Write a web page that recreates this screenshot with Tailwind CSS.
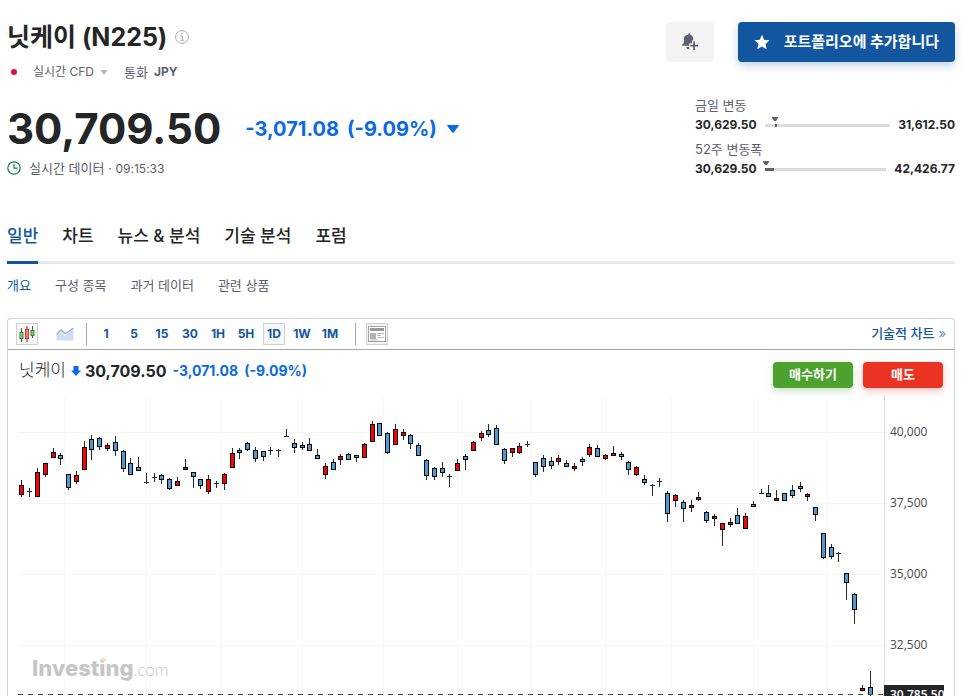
<!DOCTYPE html>
<html lang="ko">

<head>
  <meta charset="UTF-8">
  <meta name="viewport" content="width=device-width, initial-scale=1.0">
  <title>닛케이 (N225)</title>
  <script src="https://cdn.jsdelivr.net/npm/@tailwindcss/browser@4"></script>
</head>

<body class="bg-white font-['Inter','Noto_Sans_CJK_KR',sans-serif] text-[#232526] overflow-hidden">
  <div class="pl-[7px] pr-[18px] pt-[22px]">
    <!-- Header -->
    <header class="flex justify-between">
      <div>
        <div class="flex items-center gap-2 h-[30px]">
          <h1 class="text-[25px] leading-[30px] font-bold whitespace-nowrap">닛케이 (N225)</h1>
          <button aria-label="정보">
            <svg class="w-[14px] h-[14px] block" viewBox="0 0 14 14" fill="none" stroke="#a9abaf">
              <circle cx="7" cy="7" r="6.4" />
              <path d="M5.5 6h1.8v4.2M5.3 10.3h3.6" />
              <path d="M6.3 3.8h1.4" stroke-width="1.4" />
            </svg>
          </button>
        </div>
        <div class="flex items-center mt-3 h-4 text-[13px] leading-4 text-[#5b616e]">
          <span class="w-[6px] h-[6px] rounded-full bg-[#d91440] ml-1"></span>
          <button class="flex items-center gap-[6px] ml-4">
            <span class="text-xs">실시간 CFD</span>
            <svg class="w-2 h-[5px]" viewBox="0 0 8 5"><path d="M.5 0h7L4 5z" fill="#b5b8be" /></svg>
          </button>
          <span class="ml-4">통화</span>
          <b class="ml-[6px] text-xs font-bold">JPY</b>
        </div>
        <div class="flex items-center mt-6 h-[50px]">
          <span class="text-[42px] leading-[50px] font-bold">30,709.50</span>
          <span class="ml-6 text-xl font-bold text-[#0a69e5]">-3,071.08</span>
          <span class="ml-2 text-xl font-bold text-[#0a69e5]">(-9.09%)</span>
          <svg class="ml-[10px] w-3 h-2" viewBox="0 0 12 8"><path d="M.5 0h11q.6.4.2 1L6.7 7.500q-.7.7-1.400 0L.3 1Q-.1.4.5 0z" fill="#0a69e5" /></svg>
        </div>
        <div class="flex items-center gap-2 mt-[6px] h-4 text-[13px] leading-4 text-[#5b616e]">
          <svg class="w-[14px] h-[14px]" viewBox="0 0 14 14" fill="none" stroke="#0e8043" stroke-width="1.200">
            <circle cx="7" cy="7" r="6.2" />
            <path d="M7 3v4.200h3.400" />
          </svg>
          <span>실시간 데이터 · <span class="text-xs">09:15:33</span></span>
        </div>
      </div>

      <div class="flex flex-col items-end">
        <div class="flex gap-6">
          <button aria-label="알림 추가" class="w-12 h-10 rounded bg-[#f4f4f5] flex items-center justify-center">
            <svg class="w-4 h-[18px]" viewBox="0 0 16 18" fill="#5b616e">
              <path d="M6.200 1.800C6.200.8 6.700.3 7.200.3s1 .5 1 1.400c1.900.5 3 2 3 4v1.800H9.900v2.700H7.300v2.600H.200v-1.200l1.600-1.700V5.800c0-2.100 1.600-3.600 4.400-4z" />
              <path d="M4.200 14h3v2.300c-1.500.2-2.700-.8-3-2.300z" />
              <path d="M11.200 8.500h1.800v3.300h3v1.800h-3v3.300h-1.800v-3.300H8.300v-1.800h2.900z" />
            </svg>
          </button>
          <button class="h-10 px-4 rounded bg-[#1256a0] text-white text-[15px] font-bold flex items-center gap-[14px] shadow-[0_4px_8px_rgba(18,86,160,0.25)]">
            <svg class="w-4 h-4" viewBox="0 0 16 16" fill="#fff"><path d="M8 .8l2.200 4.900 5.300.6-3.900 3.600 1 5.300L8 12.600l-4.700 2.600 1.100-5.300L.5 6.300l5.300-.6z" /></svg>
            <span>포트폴리오에 추가합니다</span>
          </button>
        </div>
        <!-- Ranges -->
        <div class="w-[260px] mt-[33px]">
          <p class="text-[13px] leading-5 text-[#5b616e]">금일 변동</p>
          <div class="flex items-center gap-2 h-5 text-xs font-bold">
            <span>30,629.50</span>
            <div class="relative flex-1 h-[3px] bg-[#d9dbde]">
              <span class="absolute left-[8%] top-0 w-[2px] h-[3px] bg-[#5b616e]"></span>
              <svg class="absolute left-[6%] -top-[7px] w-[6px] h-1" viewBox="0 0 6 4"><path d="M0 0h6v1L4 4H2L0 1z" fill="#5b616e" /></svg>
            </div>
            <span>31,612.50</span>
          </div>
          <p class="mt-1 text-[13px] leading-5 text-[#5b616e]">52주 변동폭</p>
          <div class="flex items-center gap-2 h-5 text-xs font-bold">
            <span>30,629.50</span>
            <div class="relative flex-1 h-[3px] bg-[#d9dbde]">
              <span class="absolute left-0 top-0 w-[8%] h-[3px] bg-[#5b616e]"></span>
              <svg class="absolute -left-[2px] -top-[7px] w-[6px] h-1" viewBox="0 0 6 4"><path d="M0 0h6v1L4 4H2L0 1z" fill="#5b616e" /></svg>
            </div>
            <span>42,426.77</span>
          </div>
        </div>
      </div>
    </header>

    <!-- Tabs -->
    <nav class="mt-[37px]">
      <div class="flex gap-6 h-12 border-b-3 border-[#e6e9eb] text-[17px] leading-6 font-medium">
        <a href="#" class="h-12 pt-2 border-b-3 border-[#1256a0] text-[#1256a0]">일반</a>
        <a href="#" class="pt-2">차트</a>
        <a href="#" class="pt-2">뉴스 &amp; 분석</a>
        <a href="#" class="pt-2">기술 분석</a>
        <a href="#" class="pt-2">포럼</a>
      </div>
      <div class="flex gap-6 mt-[11px] text-[13px] leading-5 text-[#5b616e]">
        <a href="#" class="text-[#1256a0]">개요</a>
        <a href="#">구성 종목</a>
        <a href="#">과거 데이터</a>
        <a href="#">관련 상품</a>
      </div>
    </nav>

    <!-- Chart -->
    <section class="mt-[23px] border border-b-0 border-[#d2d3d5] rounded-t">
      <div class="flex items-center h-[31px] pl-2 pr-2 border-b border-[#a5a7a9] text-xs font-bold text-[#1256a0]">
        <button aria-label="캔들" class="w-[22px] h-[22px] border border-[#d0d0d0] bg-[#f8f8f8] flex items-center justify-center">
          <svg class="w-[18px] h-[18px]" viewBox="0 0 18 18">
            <path d="M3.500 3v14M14.500 1v12" stroke="#4c5a4c" />
            <path d="M9 1v16" stroke="#7a3030" />
            <rect x="2" y="7.500" width="3" height="6" fill="#7fd36f" stroke="#348a37" />
            <rect x="7.500" y="4.500" width="3" height="9" fill="#f77" stroke="#d33" />
            <rect x="13" y="5.500" width="3" height="5" fill="#7fd36f" stroke="#348a37" />
          </svg>
        </button>
        <button aria-label="영역" class="ml-[18px]">
          <svg class="w-[18px] h-[14px] block" viewBox="0 0 18 14">
            <path d="M.5 9L5 5l3.500 4L17.500 2v11.500H.5z" fill="#cfdef2" />
            <path d="M.5 7.500L5 3l4 3.500 2.500-1.200L17.500 1" fill="none" stroke="#8fa9c8" stroke-width="1.300" />
          </svg>
        </button>
        <span class="ml-3 w-px h-[22px] bg-[#a5a7a9]"></span>
        <div class="flex gap-[6px] ml-2">
          <button class="w-[22px] h-[22px]">1</button>
          <button class="w-[22px] h-[22px]">5</button>
          <button class="w-[22px] h-[22px]">15</button>
          <button class="w-[22px] h-[22px]">30</button>
          <button class="w-[22px] h-[22px]">1H</button>
          <button class="w-[22px] h-[22px]">5H</button>
          <button class="w-[22px] h-[22px] border border-[#d0d0d0] bg-[#f8f8f8]">1D</button>
          <button class="w-[22px] h-[22px]">1W</button>
          <button class="w-[22px] h-[22px]">1M</button>
        </div>
        <span class="ml-[14px] w-px h-[22px] bg-[#a5a7a9]"></span>
        <button aria-label="뉴스" class="ml-[10px] w-[22px] h-[22px] border border-[#d0d0d0] bg-[#f4f4f4] flex items-center justify-center">
          <svg class="w-[18px] h-[18px]" viewBox="0 0 18 18">
            <rect x=".5" y="1.500" width="17" height="15" fill="#fff" stroke="#a4a4a4" />
            <path d="M2 3h14v3H2z" fill="#999" />
            <path d="M2 8h6v6H2z" fill="#b0b0b0" />
            <path d="M9 8.500h7M9 10.500h4M9 12.500h7M2 15h8" stroke="#b9b9b9" />
          </svg>
        </button>
        <a href="#" class="ml-auto flex items-center gap-1 text-[13px] font-medium">기술적 차트 <span class="font-normal text-[#5c8fd0]">»</span></a>
      </div>

      <div class="flex items-start justify-between h-[46px] pl-[11px] pr-[11px]">
        <div class="flex items-center h-[42px]">
          <span class="text-[17px] font-light">닛케이</span>
          <svg class="ml-[5px] w-[10px] h-[10px]" viewBox="0 0 10 10"><path d="M2.500 0h5v4.500H10L5 10 0 4.500h2.500z" fill="#0a69e5" /></svg>
          <span class="ml-1 text-base font-bold">30,709.50</span>
          <span class="ml-[6px] text-sm font-bold text-[#0a69e5]">-3,071.08</span>
          <span class="ml-[6px] text-sm font-bold text-[#0a69e5]">(-9.09%)</span>
        </div>
        <div class="flex gap-[10px] mt-3 text-[13px] font-bold text-white">
          <button class="w-20 h-[26px] rounded bg-[#4ca22f] shadow-[0_3px_7px_rgba(76,162,47,0.3)]">매수하기</button>
          <button class="w-20 h-[26px] rounded bg-[#ea3323] shadow-[0_3px_7px_rgba(234,51,35,0.3)]">매도</button>
        </div>
      </div>

      <svg id="chart" class="block w-full h-auto font-['Open_Sans',sans-serif] text-xs" viewBox="8 396 946 300" role="img" aria-label="닛케이 일간 차트">
        <g id="grid" stroke="#f7f7f7" shape-rendering="crispEdges"></g>
        <text x="32" y="676" class="font-['Inter',sans-serif] text-[22px] font-extrabold" fill="#c6c6c6">Investing<tspan class="font-['Lato',sans-serif] text-[17px] font-light">.com</tspan></text>
        <rect x="102" y="658" width="4" height="3" fill="#fbe3b0" />
        <path d="M884.500 396v300" stroke="#dcdcdf" shape-rendering="crispEdges" />
        <g id="candles" shape-rendering="crispEdges"></g>
        <path d="M18 694.500h866" stroke="#444" stroke-dasharray="5 5" shape-rendering="crispEdges" />
        <g id="labels" fill="#4a4a4a"></g>
        <rect x="884" y="685" width="60" height="18" fill="#232526" />
        <text x="890" y="699" fill="#fff" class="font-semibold">30,785.50</text>
      </svg>
    </section>
  </div>

  <script>
    // x, high, body top, body bottom, low, type (r = up, b = down, d = doji)
    const candles = [
      [21,480,485,495,497,'r'],[29,488,491,491,497,'d'],[37,468,472,497,497,'r'],[45,463,463,475,477,'r'],
      [53,448,452,458,458,'r'],[60,453,455,459,465,'b'],[68,474,474,488,490,'b'],[76,471,475,482,484,'r'],
      [84,441,447,470,470,'r'],[91,435,439,450,460,'b'],[99,437,438,447,450,'b'],[107,443,445,449,451,'r'],
      [115,436,442,451,456,'b'],[123,450,451,469,472,'b'],[130,458,463,475,475,'b'],[138,457,467,471,471,'b'],
      [146,473,482,482,484,'d'],[154,473,477,477,482,'d'],[161,474,475,480,484,'b'],[169,478,479,489,490,'b'],
      [177,477,481,486,486,'r'],[185,459,467,470,470,'r'],[193,472,472,477,488,'b'],[200,479,479,486,489,'b'],
      [208,475,479,492,494,'r'],[216,481,483,483,488,'d'],[224,473,474,484,490,'r'],[232,448,453,468,468,'r'],
      [239,448,450,453,459,'b'],[247,442,443,450,451,'b'],[255,447,450,459,462,'b'],[263,451,451,457,461,'b'],
      [270,447,450,450,455,'d'],[278,449,450,450,457,'d'],[286,429,436,436,437,'d'],[294,439,443,448,453,'b'],
      [302,442,445,448,450,'b'],[309,438,444,451,451,'b'],[317,449,455,459,459,'b'],[325,463,466,475,479,'r'],
      [333,459,462,470,470,'b'],[340,454,456,460,465,'r'],[348,453,454,460,460,'b'],[356,455,455,458,462,'b'],
      [364,443,444,458,458,'r'],[372,421,424,442,442,'r'],[379,423,423,436,436,'b'],[387,432,433,453,454,'b'],
      [395,424,429,445,445,'r'],[403,429,432,436,440,'r'],[410,434,435,444,449,'b'],[418,443,445,456,456,'b'],
      [426,459,460,476,480,'b'],[434,467,468,477,480,'b'],[442,462,468,473,477,'b'],[449,474,476,476,487,'d'],
      [457,459,463,471,471,'r'],[465,454,456,460,470,'b'],[473,441,442,451,451,'r'],[481,431,433,438,441,'r'],
      [488,424,430,435,437,'b'],[496,425,428,445,445,'b'],[504,448,449,461,464,'b'],[512,448,448,453,457,'r'],
      [519,443,446,453,454,'r'],[527,441,444,444,447,'d'],[535,462,462,475,477,'b'],[543,455,458,467,472,'b'],
      [551,457,461,466,469,'b'],[558,455,458,462,465,'r'],[566,460,463,467,467,'b'],[574,463,466,469,471,'r'],
      [582,457,459,462,466,'b'],[589,444,447,455,457,'r'],[597,445,448,457,457,'b'],[605,454,455,459,460,'r'],
      [613,446,453,456,456,'r'],[621,452,454,457,460,'b'],[628,461,462,470,475,'b'],[636,466,467,475,476,'r'],
      [644,475,479,483,485,'b'],[652,484,485,485,496,'d'],[659,478,481,481,487,'d'],[667,491,493,514,522,'b'],
      [675,494,495,501,507,'r'],[683,500,502,509,522,'b'],[691,500,505,508,512,'r'],[698,492,497,500,501,'r'],
      [706,511,512,521,523,'b'],[714,514,516,519,526,'r'],[722,523,523,530,546,'r'],[730,518,522,525,527,'r'],
      [737,508,515,524,524,'b'],[745,513,516,529,529,'r'],[753,501,504,507,507,'b'],[761,489,493,493,494,'d'],
      [768,485,493,497,497,'b'],[776,490,498,501,501,'r'],[784,493,493,501,501,'b'],[792,485,490,496,498,'b'],
      [800,482,486,489,492,'b'],[807,493,494,497,501,'r'],[815,507,507,515,521,'b'],[823,533,533,558,559,'b'],
      [831,544,547,557,559,'b'],[838,552,553,553,562,'d'],[846,573,573,583,600,'b'],[854,593,594,610,624,'b'],
      [862,685,688,691,691,'r'],[870,671,687,695,696,'b']
    ];
    const prices = { 432: "40,000", 503: "37,500", 574: "35,000", 645: "32,500" };
    const columns = [64, 146, 220, 302, 383, 457, 531, 605, 671, 753, 827];

    let grid = "";
    let labels = "";
    for (const y in prices) {
      grid += `<path d="M18 ${y}.5H887" />`;
      labels += `<text x="890" y="${Number(y) + 4}">${prices[y]}</text>`;
    }
    columns.forEach(x => {
      grid += `<path d="M${x}.5 396V696" />`;
    });
    document.getElementById("grid").innerHTML = grid;
    document.getElementById("labels").innerHTML = labels;

    document.getElementById("candles").innerHTML = candles.map(([x, high, top, bottom, low, type]) => {
      const wick = `<rect x="${x}" y="${high}" width="1" height="${low - high}" fill="#232a2c" />`;
      if (type === "d") {
        return wick + `<rect x="${x - 2}" y="${top}" width="5" height="1" fill="#232a2c" />`;
      }
      const fill = type === "r" ? "#ff0000" : "#4a9cd6";
      return wick + `<rect x="${x - 2}" y="${top}" width="5" height="${bottom - top}" fill="#000" />` +
        `<rect x="${x - 1}" y="${top + 1}" width="3" height="${bottom - top - 2}" fill="${fill}" />`;
    }).join("");
  </script>
</body>

</html>
